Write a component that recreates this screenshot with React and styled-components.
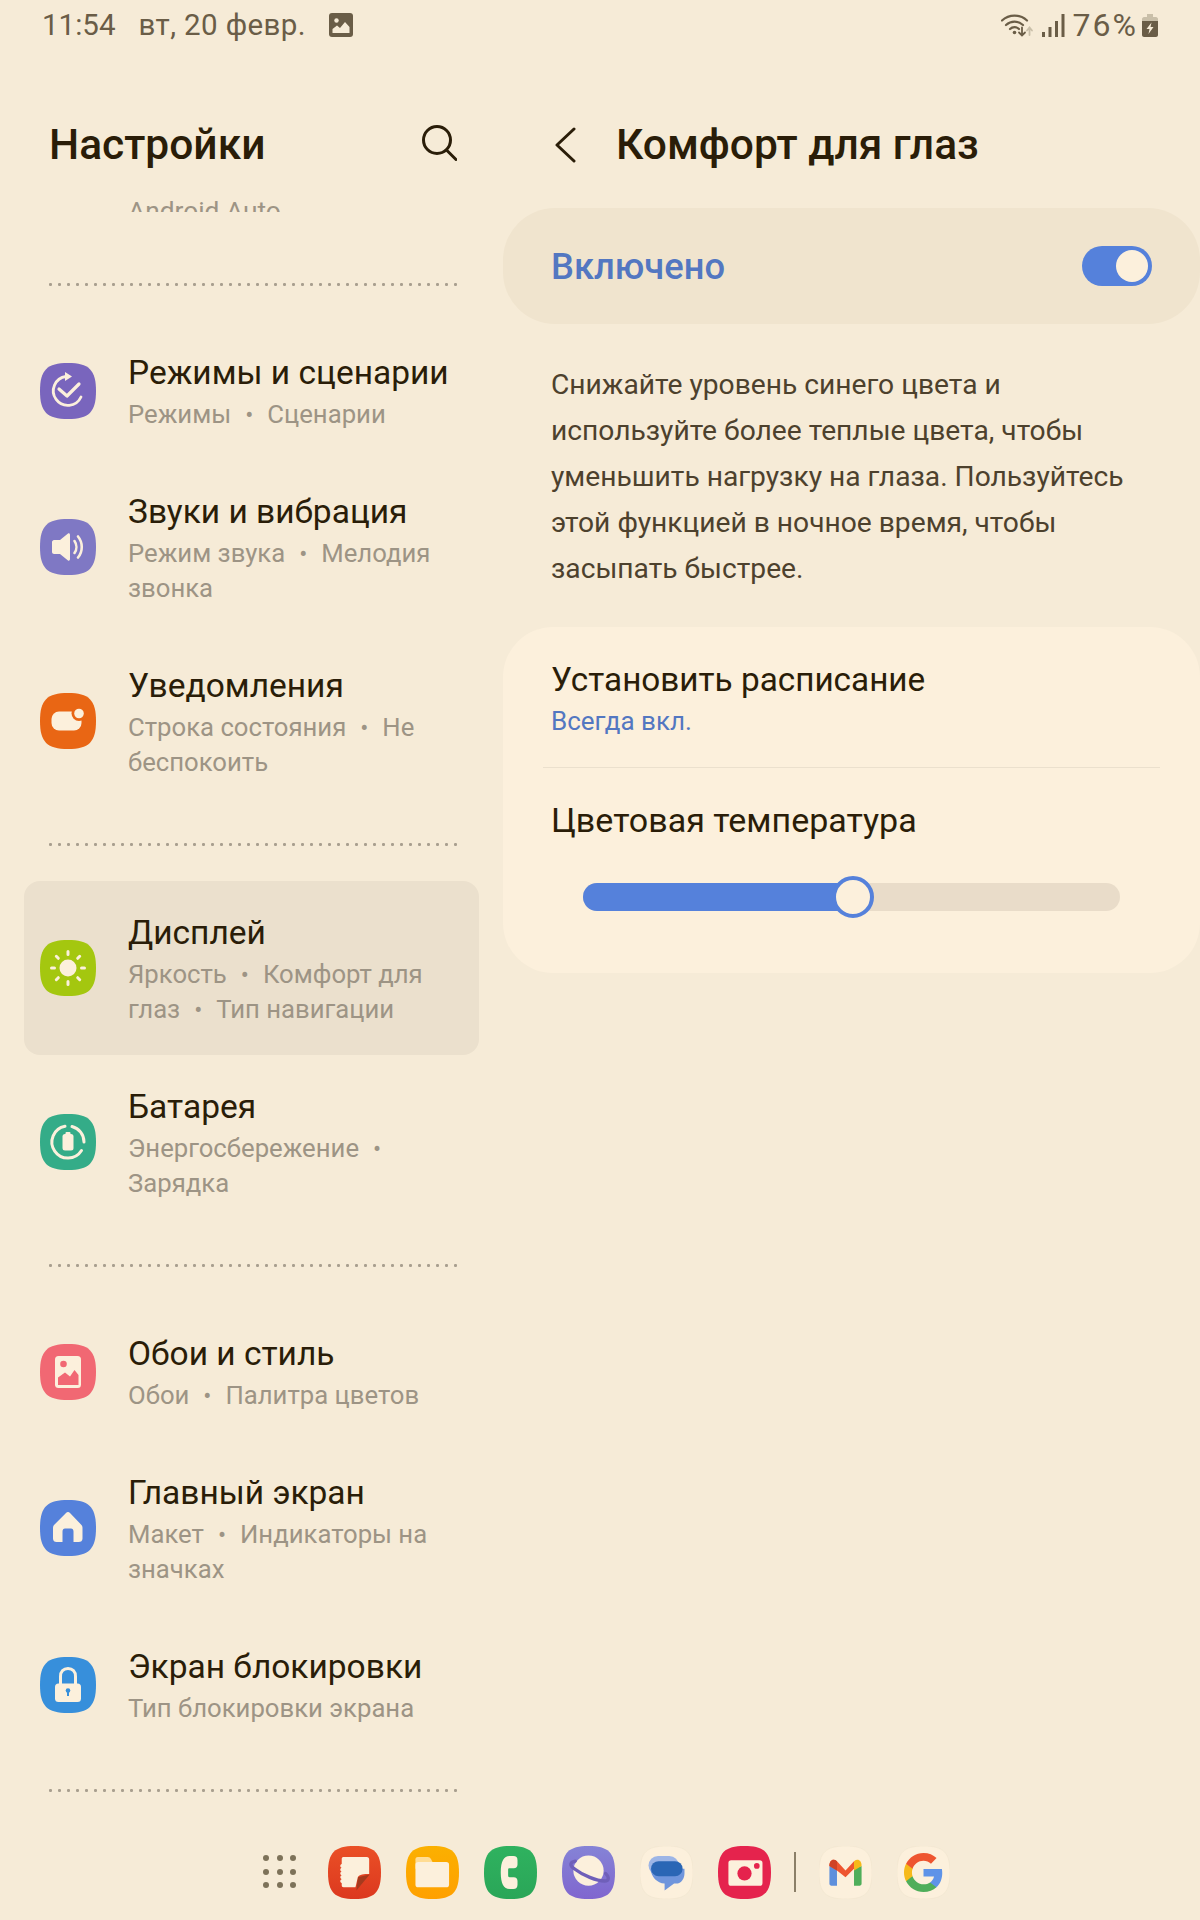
import styled, { createGlobalStyle } from "styled-components";

const Global = createGlobalStyle`
  html, body { margin: 0; padding: 0; background: #f6ebd7; }
  * { box-sizing: border-box; }
`;

const CREAM = "#fcf0dc";
const SQUIRCLE = "M28 0C49 0 56 7 56 28C56 49 49 56 28 56C7 56 0 49 0 28C0 7 7 0 28 0Z";

const Page = styled.div`
  width: 1200px;
  height: 1920px;
  overflow: hidden;
  display: flex;
  flex-direction: column;
  background: #f6ebd7;
  font-family: Roboto, "Noto Sans", sans-serif;
  color: #2a1d08;
`;
const StatusBar = styled.div`
  height: 50px;
  flex: none;
  display: flex;
  align-items: center;
  justify-content: space-between;
  padding: 0 42px 0 42px;
  color: #6a5d47;
  font-size: 29.5px;
`;
const StatusGroup = styled.div`
  display: flex;
  align-items: center;
  gap: ${(p) => p.$gap || 0}px;
`;
const DateText = styled.span`
  letter-spacing: 0.4px;
`;
const BatteryText = styled.span`
  font-size: 32px;
  letter-spacing: 2px;
  margin-right: -4px;
`;
const Main = styled.div`
  flex: 1;
  min-height: 0;
  display: flex;
`;
const LeftPanel = styled.div`
  width: 503px;
  flex: none;
`;
const RightPanel = styled.div`
  flex: 1;
  min-width: 0;
`;
const HeadRow = styled.div`
  height: ${(p) => p.$height}px;
  padding-top: 75px;
  display: flex;
  align-items: flex-start;
`;
const HeadTitle = styled.h1`
  margin: 0;
  font-size: 42.5px;
  line-height: 40px;
  font-weight: 500;
  color: #2a1d08;
`;
const SettingsTitle = styled(HeadTitle)`
  margin-left: 49px;
  flex: 1;
`;
const SearchSlot = styled.div`
  margin: 0 46px 0 0;
  line-height: 0;
`;
const BackSlot = styled.div`
  margin: 2px 40px 0 51px;
  line-height: 0;
`;
const ClippedTail = styled.div`
  height: 19px;
  overflow: hidden;
  padding: 1px 0 0 128px;
  font-size: 26.3px;
  line-height: 35px;
  color: #9d9485;
`;
const Dotted = styled.div`
  padding: 35px 45px 35px 46px;
  margin-top: ${(p) => p.$top || 0}px;
  &::before {
    content: "";
    display: block;
    height: 3px;
    background-image: radial-gradient(circle, #a99f8f 1.3px, transparent 1.7px);
    background-size: 9px 3px;
    background-repeat: repeat-x;
  }
`;
const Row = styled.div`
  width: 455px;
  margin-left: 24px;
  padding: 32px 8px 28px 16px;
  display: flex;
  align-items: center;
  gap: 32px;
  border-radius: 16px;
  background: ${(p) => (p.$active ? "#ebe0cd" : "transparent")};
`;
const IconSlot = styled.div`
  margin-bottom: 4px;
  line-height: 0;
`;
const RowText = styled.div`
  flex: 1;
  min-width: 0;
  white-space: nowrap;
`;
const RowTitle = styled.div`
  font-size: 33.5px;
  line-height: 40px;
  margin-bottom: 4px;
  color: #2a1d08;
`;
const RowSub = styled.div`
  font-size: 25.7px;
  line-height: 35px;
  height: 35px;
  color: #9d9485;
`;
const Dot = styled.span`
  margin: 0 14px;
  font-size: 24px;
  line-height: 0;
`;
const Pill = styled.div`
  height: 116px;
  border-radius: 52px;
  background: #f0e4ce;
  display: flex;
  align-items: center;
  justify-content: space-between;
  padding: 0 48px 0 48px;
`;
const PillLabel = styled.div`
  font-size: 36.3px;
  font-weight: 500;
  color: #5377c1;
`;
const Toggle = styled.div`
  width: 70px;
  height: 40px;
  border-radius: 20px;
  background: #5581db;
  padding: 4px;
  display: flex;
  justify-content: flex-end;
  &::after {
    content: "";
    width: 32px;
    height: 32px;
    border-radius: 50%;
    background: ${CREAM};
  }
`;
const Para = styled.p`
  margin: 38px 40px 35px 48px;
  font-size: 28.2px;
  line-height: 46px;
  color: #4d412d;
  white-space: nowrap;
`;
const Card = styled.div`
  background: ${CREAM};
  border-radius: 50px;
  padding: 33px 0 62px;
`;
const CardTitle = styled.div`
  margin-left: 48px;
  font-size: ${(p) => p.$size}px;
  line-height: 40px;
  color: #2a1d08;
`;
const CardValue = styled.div`
  margin: 4px 0 28px 48px;
  font-size: 26px;
  line-height: 35px;
  color: #5377c1;
`;
const Divider = styled.div`
  height: 1px;
  margin: 0 40px 32px;
  background: #ebe0cd;
`;
const Track = styled.div`
  position: relative;
  height: 28px;
  margin: 43px 80px 0;
  border-radius: 14px;
  background: #e9dcc9;
`;
const Fill = styled.div`
  height: 100%;
  width: ${(p) => p.$value}%;
  border-radius: 14px 0 0 14px;
  background: #5581db;
`;
const Thumb = styled.div`
  position: absolute;
  top: 50%;
  left: ${(p) => p.$value}%;
  width: 42px;
  height: 42px;
  transform: translate(-50%, -50%);
  border-radius: 50%;
  background: ${CREAM};
  border: 4px solid #5581db;
`;
const Dock = styled.div`
  height: 74px;
  flex: none;
  padding: 0 0 22px 263px;
  display: flex;
  align-items: center;
  gap: 25px;
  line-height: 0;
`;
const GridSlot = styled.div`
  margin-right: 6px;
`;
const DockSep = styled.div`
  width: 2px;
  height: 40px;
  margin: 0 -2px;
  background: #8b7f68;
`;

const Squircle = ({ color, size = 56, stroke, children }) => (
  <svg width={size} height={size} viewBox="0 0 56 56">
    <path d={SQUIRCLE} fill={color} stroke={stroke} strokeWidth={stroke ? 0.5 : 0} />
    {children}
  </svg>
);

const Grad = ({ id, from, to }) => (
  <defs>
    <linearGradient id={id} x1="0" y1="0" x2="0" y2="1">
      <stop offset="0" stopColor={from} />
      <stop offset="1" stopColor={to} />
    </linearGradient>
  </defs>
);

const icons = {
  modes: (
    <Squircle color="#7965bd">
      <path d="M26 13.5A14.5 14.5 0 1 0 41 34" fill="none" stroke={CREAM} strokeWidth="2.8" strokeLinecap="round" />
      <path d="M25 9L32 13.5L25 18Z" fill={CREAM} />
      <path d="M19 26L27 33L39 21" fill="none" stroke={CREAM} strokeWidth="3.2" strokeLinecap="round" strokeLinejoin="round" />
    </Squircle>
  ),
  sound: (
    <Squircle color="#7f78c4">
      <path d="M14 21H20L28 14.5C29 14 30 14.5 30 16V40C30 41.5 29 42 28 41.5L20 35H14C13 35 12 34 12 33V23C12 22 13 21 14 21Z" fill={CREAM} />
      <path d="M34.5 22C37 25.5 37 30.5 34.5 34" fill="none" stroke={CREAM} strokeWidth="2.6" strokeLinecap="round" />
      <path d="M38 17.5C43 23.5 43 32.5 38 38.5" fill="none" stroke={CREAM} strokeWidth="2.6" strokeLinecap="round" />
    </Squircle>
  ),
  notify: (
    <Squircle color="#e96614">
      <rect x="11.5" y="18.5" width="30" height="19" rx="7.5" fill={CREAM} />
      <circle cx="39" cy="20.5" r="7.5" fill="#e96614" />
      <circle cx="39" cy="20.5" r="4.8" fill={CREAM} />
    </Squircle>
  ),
  display: (
    <Squircle color="#a4c70f">
      <circle cx="28" cy="28" r="8.5" fill={CREAM} />
      <g stroke={CREAM} strokeWidth="3" strokeLinecap="round">
        <path d="M28 11.5V14.5M28 41.5V44.5M11.5 28H14.5M41.5 28H44.5M16.3 16.3L18.3 18.3M37.7 37.7L39.7 39.7M39.7 16.3L37.7 18.3M18.3 37.7L16.3 39.7" />
      </g>
    </Squircle>
  ),
  battery: (
    <Squircle color="#34ac88">
      <path d="M25 12.3A16 16 0 1 0 41.5 36.5" fill="none" stroke={CREAM} strokeWidth="3" strokeLinecap="round" />
      <path d="M32 12.5A16 16 0 0 1 44 28" fill="none" stroke={CREAM} strokeWidth="3" strokeLinecap="round" />
      <rect x="22.5" y="20" width="11" height="16.5" rx="2.5" fill={CREAM} />
      <rect x="25.5" y="18" width="5" height="3" rx="1" fill={CREAM} />
    </Squircle>
  ),
  wallpaper: (
    <Squircle color="#f16873">
      <rect x="15" y="12" width="26" height="32" rx="3.5" fill={CREAM} />
      <circle cx="23.5" cy="20" r="3.3" fill="#f16873" />
      <path d="M18 41V33.5L25 28.5L30 32.5L34.5 26L38.5 31V41Z" fill="#f16873" />
    </Squircle>
  ),
  home: (
    <Squircle color="#5581db">
      <path d="M26 13L14.5 24.5C13.5 25.5 13 26.5 13 28V38.5C13 41 14.5 42 16.5 42H22.5V31.5C22.5 29.5 23.5 28.5 25 28.5H31C32.5 28.5 33.5 29.5 33.5 31.5V42H38.5C41 42 42.5 41 42.5 38.5V28C42.5 26.5 42 25.5 41 24.5L30 13C28.8 11.8 27.2 11.8 26 13Z" fill={CREAM} />
    </Squircle>
  ),
  lock: (
    <Squircle color="#378fdb">
      <path d="M20.5 28V19.5C20.5 14.5 23.5 11.5 28 11.5C32.5 11.5 35.5 14.5 35.5 19.5V28" fill="none" stroke={CREAM} strokeWidth="3" />
      <rect x="15" y="26.5" width="26" height="18.5" rx="3.5" fill={CREAM} />
      <circle cx="28" cy="33.5" r="2.3" fill="#378fdb" />
      <rect x="27" y="34" width="2" height="5" fill="#378fdb" />
    </Squircle>
  ),
};

const rowsA = [
  { icon: "modes", title: "Режимы и сценарии", lines: [["Режимы", "Сценарии"]] },
  { icon: "sound", title: "Звуки и вибрация", lines: [["Режим звука", "Мелодия"], ["звонка"]] },
  { icon: "notify", title: "Уведомления", lines: [["Строка состояния", "Не"], ["беспокоить"]] },
];
const rowsB = [
  { icon: "display", title: "Дисплей", active: true, lines: [["Яркость", "Комфорт для"], ["глаз", "Тип навигации"]] },
  { icon: "battery", title: "Батарея", lines: [["Энергосбережение", ""], ["Зарядка"]] },
];
const rowsC = [
  { icon: "wallpaper", title: "Обои и стиль", lines: [["Обои", "Палитра цветов"]] },
  { icon: "home", title: "Главный экран", lines: [["Макет", "Индикаторы на"], ["значках"]] },
  { icon: "lock", title: "Экран блокировки", lines: [["Тип блокировки экрана"]] },
];

const SettingRow = ({ icon, title, lines, active }) => (
  <Row $active={active}>
    <IconSlot>{icons[icon]}</IconSlot>
    <RowText>
      <RowTitle>{title}</RowTitle>
      {lines.map((parts, i) => (
        <RowSub key={i}>
          {parts[0]}
          {parts.length > 1 && <Dot>•</Dot>}
          {parts[1]}
        </RowSub>
      ))}
    </RowText>
  </Row>
);

const StatusImage = () => (
  <svg width="24" height="24" viewBox="0 0 24 24">
    <rect width="24" height="24" rx="3" fill="#6a5d47" />
    <circle cx="7.5" cy="7.5" r="2.2" fill="#f6ebd7" />
    <path d="M3.5 20V16L8 12.5L11 15L16 9L20.5 14V20Z" fill="#f6ebd7" />
  </svg>
);

const WifiIcon = () => (
  <svg width="33" height="24" viewBox="0 0 33 24" fill="none">
    <g stroke="#6a5d47" strokeWidth="2.2" strokeLinecap="round">
      <path d="M1 7.5C8 1 19 1 26 7.5" />
      <path d="M5 12C10 7.5 17 7.5 22 12" />
      <path d="M9 16C11.5 13.5 15.5 13.5 18 16" />
      <path d="M21 14.5V22M18 19.5L21 22.5L24 19.5" strokeWidth="1.8" />
    </g>
    <circle cx="13.5" cy="19.5" r="1.8" fill="#6a5d47" />
    <path d="M28.5 22V15M26 17.5L28.5 14.5L31 17.5" stroke="#c9bfa9" strokeWidth="1.8" strokeLinecap="round" />
  </svg>
);

const SignalIcon = () => (
  <svg width="23" height="23" viewBox="0 0 23 23" fill="#6a5d47">
    <rect x="0" y="18" width="3" height="5" />
    <rect x="6.5" y="13" width="3" height="10" />
    <rect x="13" y="7" width="3" height="16" />
    <rect x="19.5" y="0" width="3" height="23" />
  </svg>
);

const BatteryIcon = () => (
  <svg width="16" height="23" viewBox="0 0 16 23">
    <path d="M5 0H11V3H14C15 3 16 4 16 5V8H0V5C0 4 1 3 2 3H5Z" fill="#c9bfa9" />
    <path d="M0 7H16V21C16 22 15 23 14 23H2C1 23 0 22 0 21Z" fill="#6a5d47" />
    <path d="M9.5 8.5L4.5 15H7.5L6.5 20L11.5 13H8.5Z" fill="#f6ebd7" />
  </svg>
);

const SearchIcon = () => (
  <svg width="36" height="36" viewBox="0 0 36 36" fill="none" stroke="#2a1d08" strokeWidth="3" strokeLinecap="round">
    <circle cx="16" cy="15" r="13.5" />
    <path d="M25.5 25L35 34.5" />
  </svg>
);

const BackIcon = () => (
  <svg width="22" height="36" viewBox="0 0 22 36" fill="none" stroke="#2a1d08" strokeWidth="3" strokeLinecap="round" strokeLinejoin="round">
    <path d="M20 2L3 18L20 34" />
  </svg>
);

const DOCK = 53;

const AppsGrid = () => (
  <svg width="34" height="34" viewBox="0 0 34 34" fill="#7d7259">
    {[3, 17, 30].flatMap((y) =>
      [3, 17, 30].map((x) => <circle key={`${x}${y}`} cx={x} cy={y} r="3" />)
    )}
  </svg>
);

const dockIcons = [
  <Squircle key="notes" color="url(#notesBg)" size={DOCK}>
    <Grad id="notesBg" from="#ea5026" to="#dc381f" />
    <path d="M44 30L30 47L31.5 33Z" fill="#a53a1e" />
    <path d="M16 11.7H41C42.7 11.7 43.5 12.7 43.5 14.5V29.5C38 29.5 33 30 31.5 33C30.8 36 30 40 29 43.6H16.5C15 43.6 14.5 42.7 14.5 41.5V39C12.5 38.5 12.5 35.5 14.5 35C12.5 34.5 12.5 31.5 14.5 31C12.5 30.5 12.5 27.5 14.5 27C12.5 26.5 12.5 23.5 14.5 23C12.5 22.5 12.5 19.5 14.5 19V14C14.5 12.7 15 11.7 16 11.7Z" fill={CREAM} />
  </Squircle>,
  <Squircle key="files" color="url(#filesBg)" size={DOCK}>
    <Grad id="filesBg" from="#fbb000" to="#ffa000" />
    <path d="M10 14C10 12.5 11 11.7 12.5 11.7H23C24.5 11.7 25.5 12.5 26.5 14L28 17V24H10Z" fill="#ffdc93" />
    <rect x="10" y="17" width="35.5" height="26.6" rx="3" fill={CREAM} />
  </Squircle>,
  <Squircle key="phone" color="url(#phoneBg)" size={DOCK}>
    <Grad id="phoneBg" from="#2fb25f" to="#2aa658" />
    <path d="M27 10.6C21 10.6 17.7 16 17.7 28C17.7 40 21 45.4 27 45.4H31C34 45.4 35.4 44 35.4 41V37C35.4 34.5 34 33 31.5 33H27C26 33 25.5 32.5 25.5 31V25C25.5 24 26 23.5 27 23.5H31.5C34 23.5 35.4 22 35.4 19.5V15C35.4 12 34 10.6 31 10.6Z" fill={CREAM} />
  </Squircle>,
  <Squircle key="internet" color="url(#internetBg)" size={DOCK}>
    <Grad id="internetBg" from="#8583d6" to="#8066cf" />
    <circle cx="28" cy="26" r="16" fill={CREAM} />
    <path d="M14 16C8 17 8 21 13 24C22 31 37 37 45 37C50 37 50 33 46 29" fill="none" stroke="#6f5fb9" strokeWidth="3.5" strokeLinecap="round" />
  </Squircle>,
  <Squircle key="messages" color={CREAM} size={DOCK} stroke="#efe3cd">
    <rect x="9" y="10.6" width="32" height="20" rx="10" fill="#9db5e6" />
    <path d="M11 24C12 33 18 39 26 39.7V47L36 39.7H38C44 39.7 47 34 47 29V24Z" fill="#6f95dc" />
    <rect x="11.7" y="16" width="33.3" height="16" rx="8" fill="#2a66b5" />
  </Squircle>,
  <Squircle key="camera" color="#e5234d" size={DOCK}>
    <rect x="11" y="15" width="36" height="27" rx="3" fill={CREAM} />
    <circle cx="28" cy="29" r="7.5" fill="#e5234d" />
    <circle cx="41" cy="21" r="3" fill="#e5234d" />
  </Squircle>,
  <DockSep key="sep" />,
  <Squircle key="gmail" color={CREAM} size={DOCK} stroke="#efe3cd">
    <path d="M11 21V40C11 41 12 42 13 42H19V24Z" fill="#5e8fdc" />
    <path d="M37 24V42H43C44 42 45 41 45 40V21Z" fill="#4fae5a" />
    <path d="M11 21C11 15 15 13 19 16L28 26L37 16V24L28 33L19 26Z" fill="#ee5530" />
    <path d="M11 21C11 15 15 13 19 16V26Z" fill="#cf4227" />
    <path d="M37 16C41 13 45 15 45 21L37 26Z" fill="#f6b91a" />
  </Squircle>,
  <Squircle key="google" color={CREAM} size={DOCK} stroke="#efe3cd">
    <g transform="translate(5.5 5.5) scale(1.875)">
      <path fill="#5e93e8" d="M22.56 12.25c0-.78-.07-1.53-.2-2.25H12v4.26h5.92c-.26 1.37-1.04 2.53-2.21 3.31v2.77h3.57c2.08-1.92 3.28-4.74 3.28-8.09z" />
      <path fill="#4fae5a" d="M12 23c2.97 0 5.46-.98 7.28-2.66l-3.57-2.77c-.98.66-2.23 1.06-3.71 1.06-2.86 0-5.29-1.93-6.16-4.53H2.18v2.84C3.99 20.53 7.7 23 12 23z" />
      <path fill="#f6b91a" d="M5.84 14.09c-.22-.66-.35-1.36-.35-2.09s.13-1.43.35-2.09V7.07H2.18C1.43 8.55 1 10.22 1 12s.43 3.45 1.18 4.93l2.85-2.22.81-.62z" />
      <path fill="#ee5530" d="M12 5.38c1.62 0 3.06.56 4.21 1.64l3.15-3.15C17.45 2.09 14.97 1 12 1 7.7 1 3.99 3.47 2.18 7.07l3.66 2.84c.87-2.6 3.3-4.53 6.16-4.53z" />
    </g>
  </Squircle>,
];

export default function App() {
  return (
    <Page>
      <Global />
      <StatusBar>
        <StatusGroup $gap={23}>
          <span>11:54</span>
          <DateText>вт, 20 февр.</DateText>
          <StatusImage />
        </StatusGroup>
        <StatusGroup $gap={8}>
          <WifiIcon />
          <SignalIcon />
          <BatteryText>76%</BatteryText>
          <BatteryIcon />
        </StatusGroup>
      </StatusBar>
      <Main>
        <LeftPanel>
          <HeadRow $height={143}>
            <SettingsTitle>Настройки</SettingsTitle>
            <SearchSlot>
              <SearchIcon />
            </SearchSlot>
          </HeadRow>
          <ClippedTail>Android Auto</ClippedTail>
          <Dotted $top={36} />
          {rowsA.map((r) => (
            <SettingRow key={r.icon} {...r} />
          ))}
          <Dotted />
          {rowsB.map((r) => (
            <SettingRow key={r.icon} {...r} />
          ))}
          <Dotted />
          {rowsC.map((r) => (
            <SettingRow key={r.icon} {...r} />
          ))}
          <Dotted />
        </LeftPanel>
        <RightPanel>
          <HeadRow $height={158}>
            <BackSlot>
              <BackIcon />
            </BackSlot>
            <HeadTitle>Комфорт для глаз</HeadTitle>
          </HeadRow>
          <Pill>
            <PillLabel>Включено</PillLabel>
            <Toggle />
          </Pill>
          <Para>
            Снижайте уровень синего цвета и
            <br />
            используйте более теплые цвета, чтобы
            <br />
            уменьшить нагрузку на глаза. Пользуйтесь
            <br />
            этой функцией в ночное время, чтобы
            <br />
            засыпать быстрее.
          </Para>
          <Card>
            <CardTitle $size={33.3}>Установить расписание</CardTitle>
            <CardValue>Всегда вкл.</CardValue>
            <Divider />
            <CardTitle $size={34}>Цветовая температура</CardTitle>
            <Track>
              <Fill $value={50.2} />
              <Thumb $value={50.2} />
            </Track>
          </Card>
        </RightPanel>
      </Main>
      <Dock>
        <GridSlot>
          <AppsGrid />
        </GridSlot>
        {dockIcons}
      </Dock>
    </Page>
  );
}
